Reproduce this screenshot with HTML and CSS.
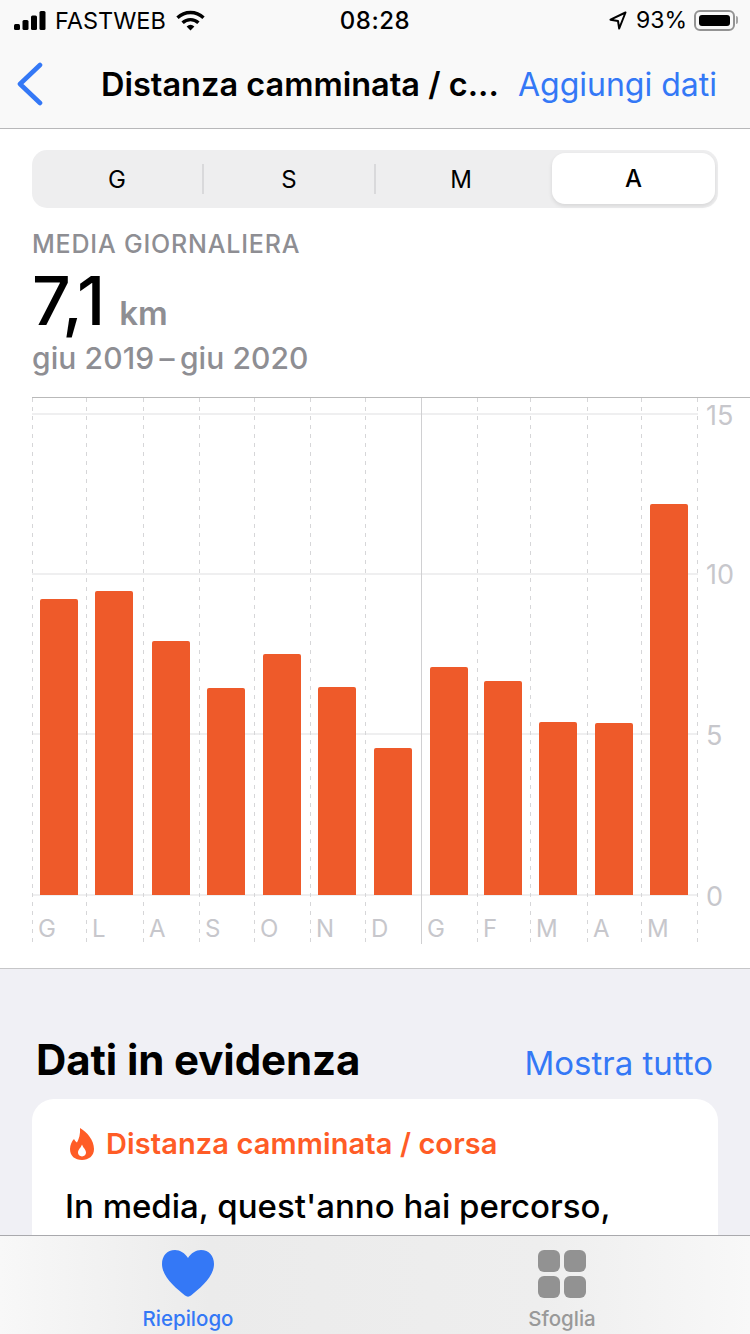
FILE: index.html
```html
<!DOCTYPE html>
<html lang="it">
<head>
    <meta charset="UTF-8">
    <meta name="viewport" content="width=device-width, initial-scale=1.0">
    <title>Distanza camminata / corsa</title>
    <link rel="stylesheet" href="styles.css">
</head>
<body>
    <header class="topbar">
        <div class="status">
            <div class="status-left">
                <svg class="signal" width="32" height="19" viewBox="0 0 32 19"><rect x="0" y="13" width="6" height="6" rx="1.5"/><rect x="8.5" y="9" width="6" height="10" rx="1.5"/><rect x="17" y="4.5" width="6" height="14.5" rx="1.5"/><rect x="25.5" y="0" width="6" height="19" rx="1.5"/></svg>
                <span>FASTWEB</span>
                <svg class="wifi" width="29" height="21" viewBox="0 0 29 21"><path d="M1.5 7.7A19 19 0 0 1 27.5 7.7" fill="none" stroke="#000" stroke-width="3.4"/><path d="M6.6 12.8A11.5 11.5 0 0 1 22.4 12.8" fill="none" stroke="#000" stroke-width="3.4"/><path d="M10.6 16.4A6 6 0 0 1 18.4 16.4L14.5 20.6Z"/></svg>
            </div>
            <div class="status-time">08:28</div>
            <div class="status-right">
                <svg class="arrow" width="18" height="19" viewBox="0 0 18 19"><path d="M16.5 1.5L1.5 8.7L9 10L10.2 17.5Z" fill="none" stroke="#000" stroke-width="2" stroke-linejoin="round"/></svg>
                <span>93%</span>
                <div class="battery"><div class="battery-fill"></div></div>
                <div class="battery-nub"></div>
            </div>
        </div>
        <nav class="navbar">
            <svg class="back" width="26" height="44" viewBox="0 0 26 44"><path d="M23 3L3 22L23 41" fill="none" stroke="#3478f6" stroke-width="4.6" stroke-linecap="round" stroke-linejoin="round"/></svg>
            <div class="nav-title">Distanza camminata / c...</div>
            <a class="nav-action">Aggiungi dati</a>
        </nav>
    </header>

    <main class="content">
        <section class="panel">
            <div class="segments">
                <div class="seg">G</div>
                <div class="seg-sep"></div>
                <div class="seg">S</div>
                <div class="seg-sep"></div>
                <div class="seg">M</div>
                <div class="seg-sep seg-sep-off"></div>
                <div class="seg seg-active">A</div>
            </div>

            <div class="summary">
                <div class="summary-label">MEDIA GIORNALIERA</div>
                <div class="summary-value"><span>7,1</span><span class="summary-unit">km</span></div>
                <div class="summary-range">giu 2019&thinsp;–&thinsp;giu 2020</div>
            </div>

            <div class="chart">
                <div class="gridline" style="top: 15px"></div>
                <div class="gridline" style="top: 175px"></div>
                <div class="gridline" style="top: 335px"></div>
                <div class="gridline" style="top: 496px"></div>

                <div class="tick" style="top: 2px">15</div>
                <div class="tick" style="top: 161px">10</div>
                <div class="tick" style="top: 322px">5</div>
                <div class="tick" style="top: 483px">0</div>

                <div class="columns">
                    <div class="col"><div class="col-plot"><div class="bar" style="height: 296px"></div></div><div class="col-label">G</div></div>
                    <div class="col"><div class="col-plot"><div class="bar" style="height: 304px"></div></div><div class="col-label">L</div></div>
                    <div class="col"><div class="col-plot"><div class="bar" style="height: 254px"></div></div><div class="col-label">A</div></div>
                    <div class="col"><div class="col-plot"><div class="bar" style="height: 207px"></div></div><div class="col-label">S</div></div>
                    <div class="col"><div class="col-plot"><div class="bar" style="height: 241px"></div></div><div class="col-label">O</div></div>
                    <div class="col"><div class="col-plot"><div class="bar" style="height: 208px"></div></div><div class="col-label">N</div></div>
                    <div class="col"><div class="col-plot"><div class="bar" style="height: 147px"></div></div><div class="col-label">D</div></div>
                    <div class="col col-year"><div class="col-plot"><div class="bar" style="height: 228px"></div></div><div class="col-label">G</div></div>
                    <div class="col"><div class="col-plot"><div class="bar" style="height: 214px"></div></div><div class="col-label">F</div></div>
                    <div class="col"><div class="col-plot"><div class="bar" style="height: 173px"></div></div><div class="col-label">M</div></div>
                    <div class="col"><div class="col-plot"><div class="bar" style="height: 172px"></div></div><div class="col-label">A</div></div>
                    <div class="col col-last"><div class="col-plot"><div class="bar" style="height: 391px"></div></div><div class="col-label">M</div></div>
                </div>
            </div>
        </section>

        <section class="highlights">
            <div class="highlights-head">
                <h2>Dati in evidenza</h2>
                <a class="show-all">Mostra tutto</a>
            </div>
            <div class="card">
                <div class="card-title">
                    <svg class="flame" width="24" height="32" viewBox="0 0 24 32"><path fill-rule="evenodd" d="M10 0C17 4 24 12 24 21C24 28 18.5 32 12 32C5 32 0 28 0 21C0 17 2 13 4 11C5 13 6 14 7 14.5C9 11 10.5 6 10 0ZM12 28.5C9.5 28.5 8 26.8 8 24.6C8 21.6 11 19.6 12 16.5C13 19.6 16 21.6 16 24.6C16 26.8 14.5 28.5 12 28.5Z"/></svg>
                    <span>Distanza camminata / corsa</span>
                </div>
                <p class="card-text">In media, quest'anno hai percorso,</p>
            </div>
        </section>
    </main>

    <footer class="tabbar">
        <div class="tab tab-active">
            <svg width="52" height="47" viewBox="0 0 52 47"><path d="M26 8C23 3 18 0 13 0C5 0 0 6 0 14C0 27 14 38 23 45.5C25 47 27 47 29 45.5C38 38 52 27 52 14C52 6 47 0 39 0C34 0 29 3 26 8Z" fill="#3478f6"/></svg>
            <span>Riepilogo</span>
        </div>
        <div class="tab">
            <div class="grid-icon"><i></i><i></i><i></i><i></i></div>
            <span>Sfoglia</span>
        </div>
    </footer>
</body>
</html>
```

FILE: styles.css
```css
* {
    box-sizing: border-box;
}
body {
    font-family: Inter, "Liberation Sans", sans-serif;
    margin: 0;
    height: 1334px;
    overflow: hidden;
    display: flex;
    flex-direction: column;
    background-color: #f0f0f5;
    color: #000;
}

/* top */
.topbar {
    height: 129px;
    background-color: #f9f9f9;
    border-bottom: 1px solid #b8b8ba;
}
.status {
    height: 40px;
    padding: 0 12px;
    display: grid;
    grid-template-columns: 1fr auto 1fr;
    align-items: center;
    font-size: 23px;
}
.status-left {
    display: flex;
    align-items: center;
    padding-left: 2px;
}
.status-left span {
    margin-left: 9px;
    font-size: 23.5px;
}
.wifi {
    margin-left: 10px;
}
.status-time {
    font-size: 24px;
    font-weight: 500;
    letter-spacing: 0.5px;
}
.status-right {
    display: flex;
    align-items: center;
    justify-content: flex-end;
}
.status-right span {
    margin-left: 9px;
    margin-right: 7px;
}
.battery {
    width: 41px;
    height: 21px;
    padding: 3px;
    border: 2px solid #939393;
    border-radius: 6px;
}
.battery-fill {
    height: 100%;
    background-color: #000;
    border-radius: 3px;
}
.battery-nub {
    width: 2px;
    height: 8px;
    margin-left: 1px;
    background-color: #a5a5a5;
    border-radius: 0 2px 2px 0;
}
.navbar {
    height: 88px;
    padding: 0 33px 0 17px;
    display: flex;
    align-items: center;
}
.nav-title {
    margin-left: 58px;
    font-size: 32.5px;
    font-weight: 600;
    white-space: nowrap;
}
.nav-action {
    margin-left: auto;
    font-size: 32px;
    color: #3478f6;
    white-space: nowrap;
}

/* chart panel */
.content {
    flex: 1;
    overflow: hidden;
}
.panel {
    height: 840px;
    padding: 21px 0 0 32px;
    background-color: #fff;
    border-bottom: 1px solid #c6c6c8;
}
.segments {
    width: 686px;
    height: 58px;
    display: flex;
    align-items: center;
    background-color: #eeeeef;
    border-radius: 15px;
}
.seg {
    flex: 1;
    text-align: center;
    font-size: 24px;
}
.seg-sep {
    width: 2px;
    height: 30px;
    background-color: #d9d9db;
}
.seg-sep-off {
    background-color: transparent;
}
.seg-active {
    flex: none;
    width: 163px;
    height: 51px;
    margin: 0 3px 1px 4px;
    font-weight: 500;
    line-height: 51px;
    background-color: #fff;
    border-radius: 13px;
    box-shadow: 0 2px 4px rgba(0, 0, 0, 0.1);
}
.summary {
    height: 189px;
    padding-top: 20px;
}
.summary-label {
    font-size: 25px;
    font-weight: 500;
    line-height: 32px;
    letter-spacing: 0.8px;
    color: #8e8e93;
}
.summary-value {
    margin-top: 2px;
    display: flex;
    align-items: baseline;
    gap: 14px;
    font-size: 68px;
    font-weight: 500;
    line-height: 76px;
}
.summary-unit {
    font-size: 33px;
    font-weight: 600;
    color: #8e8e93;
}
.summary-range {
    margin-top: -11px;
    font-size: 30px;
    font-weight: 500;
    line-height: 36px;
    letter-spacing: 0.1px;
    color: #8e8e93;
}
.chart {
    position: relative;
    height: 547px;
    border-top: 1px solid #b9b9b9;
}
.gridline {
    position: absolute;
    left: 0;
    width: 666px;
    height: 2px;
    background-color: #efeff0;
}
.tick {
    position: absolute;
    left: 674px;
    font-size: 27px;
    line-height: 32px;
    color: #c7c7cc;
}
.columns {
    position: relative;
    display: grid;
    grid-template-columns: 54px 57px 56px 55px 56px 55px 56px 56px 53px 57px 54px 57px;
    width: 667px;
}
.col {
    background: repeating-linear-gradient(#d6d6d8 0 4px, transparent 4px 9px) left top / 1px 100% no-repeat;
}
.col-year {
    background: linear-gradient(#d0d0d2, #d0d0d2) left top / 1px 100% no-repeat;
}
.col-last {
    background:
        repeating-linear-gradient(#d6d6d8 0 4px, transparent 4px 9px) left top / 1px 100% no-repeat,
        repeating-linear-gradient(#d6d6d8 0 4px, transparent 4px 9px) right top / 1px 100% no-repeat;
}
.col-plot {
    height: 497px;
    padding-right: 1px;
    display: flex;
    align-items: flex-end;
    justify-content: center;
}
.bar {
    width: 38px;
    background-color: #ee5a2a;
    border-radius: 2px 2px 0 0;
}
.col-label {
    height: 49px;
    padding: 20px 0 0 6px;
    font-size: 24px;
    line-height: 28px;
    color: #c7c7cc;
}

/* highlights */
.highlights {
    padding: 0 32px;
}
.highlights-head {
    height: 130px;
    padding: 61px 5px 0 4px;
    display: flex;
    justify-content: space-between;
    align-items: baseline;
}
.highlights-head h2 {
    margin: 0;
    font-size: 42px;
    font-weight: 700;
    line-height: 60px;
    letter-spacing: -0.1px;
}
.show-all {
    font-size: 33px;
    color: #3478f6;
}
.card {
    height: 300px;
    padding: 27px 33px;
    background-color: #fff;
    border-radius: 22px;
}
.card-title {
    display: flex;
    align-items: center;
    padding-left: 5px;
    font-size: 29px;
    font-weight: 600;
    letter-spacing: 0.1px;
    color: #ff5c26;
}
.card-title span {
    margin-left: 12px;
}
.flame {
    fill: #ff5c26;
}
.card-text {
    margin: 25px 0 0;
    font-size: 33px;
    font-weight: 500;
    line-height: 40px;
}

/* tabs */
.tabbar {
    height: 99px;
    flex: none;
    display: flex;
    padding: 14px 0 0;
    background: linear-gradient(90deg, #f8f8f8, #ebebeb 28%, #eeeeee 72%, #f8f8f8);
    border-top: 1px solid #a9a9ad;
}
.tab {
    width: 376px;
    display: flex;
    flex-direction: column;
    align-items: center;
    font-size: 20.5px;
    font-weight: 500;
    color: #999;
}
.tab:last-child {
    width: 374px;
    padding-right: 2px;
}
.tab span {
    margin-top: 9px;
    line-height: 26px;
}
.tab-active {
    color: #3478f6;
}
.grid-icon {
    width: 48px;
    height: 47px;
    display: grid;
    grid-template-columns: 22px 22px;
    grid-auto-rows: 22px;
    gap: 4px;
}
.grid-icon i {
    background-color: #929292;
    border-radius: 6px;
}
```
